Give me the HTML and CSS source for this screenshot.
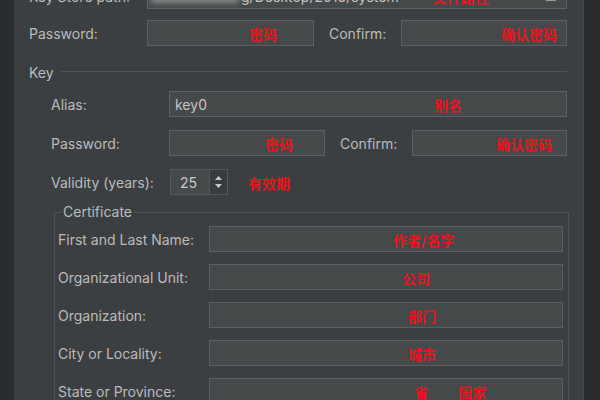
FILE: index.html
```html
<!DOCTYPE html>
<html>
<head>
<meta charset="utf-8">
<link rel="stylesheet" href="styles.css">
</head>
<body>
<div class="frame">
  <div class="panel">
    <div class="row row-path">
      <div class="label w-top">Key Store path:</div>
      <div class="field field-path">
        <span class="blur"></span><span class="path">g/Desktop/2016/system</span>
        <span class="note note-path">文件路径</span>
        <span class="btn"></span>
      </div>
    </div>
    <div class="row row-pass">
      <div class="label w-top">Password:</div>
      <div class="field f-top1"><span class="note" style="margin-left:96px">密码</span></div>
      <div class="label w-conf1">Confirm:</div>
      <div class="field f-top2"><span class="note" style="margin-left:94px">确认密码</span></div>
    </div>

    <div class="section">
      <span class="section-title">Key</span>
      <span class="section-line"></span>
    </div>

    <div class="key">
      <div class="row">
        <div class="label w-key">Alias:</div>
        <div class="field grow"><span class="val">key0</span><span class="note" style="margin-left:227px">别名</span></div>
      </div>
      <div class="row">
        <div class="label w-key">Password:</div>
        <div class="field f-key1"><span class="note" style="margin-left:90px">密码</span></div>
        <div class="label w-conf2">Confirm:</div>
        <div class="field grow"><span class="note" style="margin-left:78px">确认密码</span></div>
      </div>
      <div class="row row-valid">
        <div class="label w-key">Validity (years):</div>
        <div class="spinner">
          <span class="num">25</span>
          <span class="arrows">
            <svg width="9" height="14" viewBox="0 0 9 14"><path d="M4.5 1 L8 5 L1 5 Z M4.5 13 L8 9 L1 9 Z" fill="#c8c8c8"/></svg>
          </span>
        </div>
        <span class="note note-valid">有效期</span>
      </div>

      <fieldset class="cert">
        <legend>Certificate</legend>
        <div class="crow">
          <div class="label w-cert">First and Last Name:</div>
          <div class="field grow"><span class="note" style="margin-left:178px">作者/名字</span></div>
        </div>
        <div class="crow">
          <div class="label w-cert">Organizational Unit:</div>
          <div class="field grow"><span class="note" style="margin-left:187px">公司</span></div>
        </div>
        <div class="crow">
          <div class="label w-cert">Organization:</div>
          <div class="field grow"><span class="note" style="margin-left:193px">部门</span></div>
        </div>
        <div class="crow">
          <div class="label w-cert">City or Locality:</div>
          <div class="field grow"><span class="note" style="margin-left:193px">城市</span></div>
        </div>
        <div class="crow">
          <div class="label w-cert">State or Province:</div>
          <div class="field grow"><span class="note" style="margin-left:199px">省</span><span class="note" style="margin-left:30px">国家</span></div>
        </div>
      </fieldset>
    </div>
  </div>
</div>
</body>
</html>
```

FILE: styles.css
```css
* { box-sizing: border-box; }
html, body { margin: 0; padding: 0; }
body {
  width: 600px;
  height: 400px;
  overflow: hidden;
  background: #2c2d2f;
  font-family: Inter, "Liberation Sans", "Noto Sans CJK SC", sans-serif;
  font-size: 14px;
  color: #bbbbbb;
}
.frame {
  height: 400px;
  padding-left: 14px;
  background: #2b2c2e;
  overflow: hidden;
}
.panel {
  display: flow-root;
  width: 570px;
  height: 420px;
  background: #3c3f41;
  border-right: 1px solid #47494c;
  padding: 0 16px 0 15px;
}
.row {
  display: flex;
  align-items: center;
  height: 26px;
  margin-bottom: 13px;
}
.row-path { margin-top: -17px; margin-bottom: 11px; }
.row-pass { margin-bottom: 0; }
.row-valid { margin-bottom: 0; }
.label { flex: none; white-space: nowrap; }
.w-top { width: 118px; }
.w-conf1 { width: 87px; padding-left: 15px; }
.w-key { width: 118px; }
.w-conf2 { width: 87px; padding-left: 15px; }
.w-cert { width: 151px; }

.field {
  height: 26px;
  background: #45494a;
  border: 1px solid #5d6062;
  display: flex;
  align-items: center;
  padding-left: 5px;
  flex: none;
  overflow: hidden;
}
.grow { flex: 1; }
.field-path { width: 420px; position: relative; padding-left: 3px; }
.f-top1 { width: 167px; }
.f-top2 { width: 166px; }
.f-key1 { width: 156px; }

.blur {
  width: 88px;
  height: 14px;
  background: #8a8c8d;
  filter: blur(3px);
  flex: none;
}
.path { color: #c4c4c4; margin-left: 2px; }
.note-path { margin-left: 34px; }
.btn {
  position: absolute;
  right: 9px;
  top: 5px;
  width: 12px;
  height: 12px;
  background: #9a9c9d;
  border-radius: 2px;
}

.note {
  color: #e5161d;
  font-family: "Noto Sans CJK SC", sans-serif;
  font-weight: 700;
  font-size: 14px;
  white-space: nowrap;
  flex: none;
  line-height: 1;
  padding-top: 2px;
}
.val { color: #c4c4c4; }

.section {
  display: flex;
  align-items: center;
  margin-top: 17px;
  margin-bottom: 10px;
  height: 18px;
}
.section-title { flex: none; }
.section-line {
  flex: 1;
  height: 1px;
  background: #505355;
  margin-left: 7px;
  margin-top: -2px;
}

.key { padding-left: 22px; }

.spinner {
  display: flex;
  height: 26px;
  width: 58px;
  margin-left: 1px;
  border: 1px solid #55585a;
  flex: none;
}
.num {
  width: 38px;
  background: #45494a;
  color: #c8c8c8;
  display: flex;
  align-items: center;
  padding-left: 9px;
}
.arrows {
  flex: 1;
  background: #393c3e;
  border-left: 1px solid #55585a;
  display: flex;
  align-items: center;
  justify-content: center;
}
.note-valid { margin-left: 20px; }

.cert {
  margin: 8px -2px 0 3px;
  padding: 5px 5px 0 3px;
  border: 1px solid #505355;
  border-bottom: none;
  min-width: 0;
}
.cert legend {
  padding: 0 2px;
  margin-left: 3px;
  line-height: 18px;
}
.crow {
  display: flex;
  align-items: center;
  height: 26px;
  margin-bottom: 12px;
}
```
